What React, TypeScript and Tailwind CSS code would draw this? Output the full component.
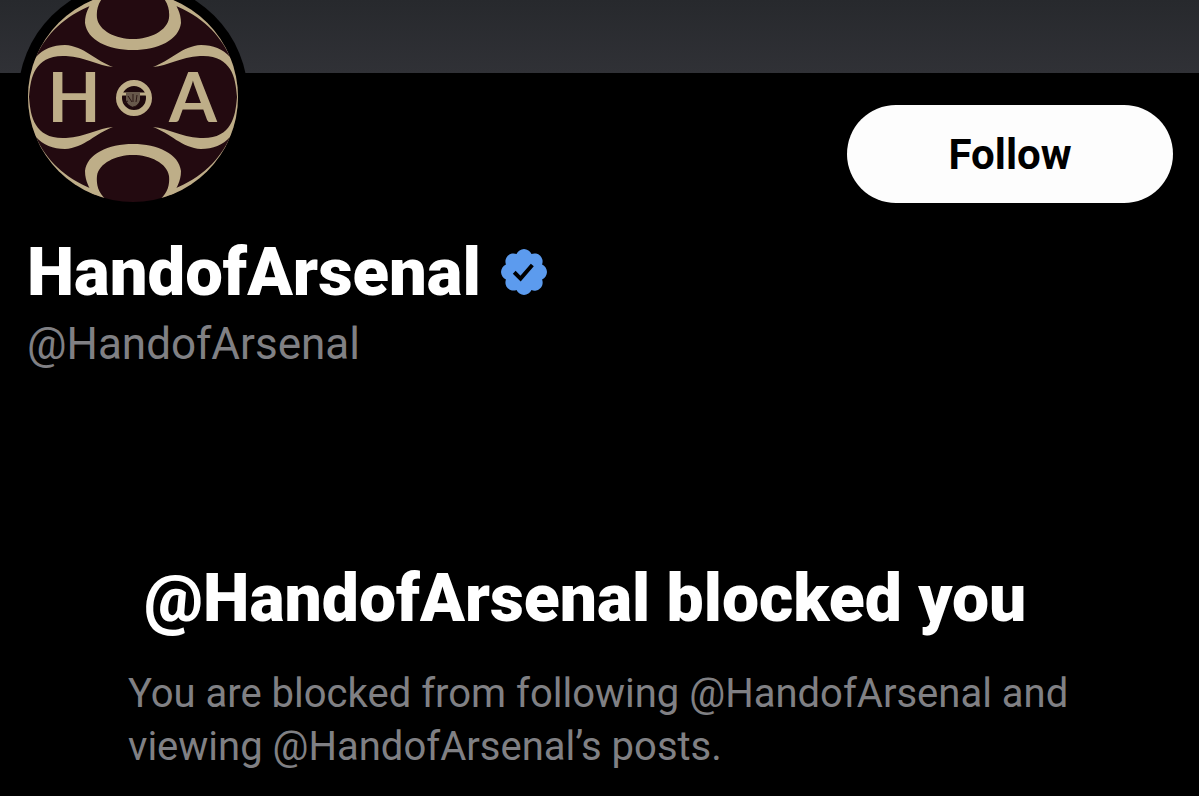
import React from 'react';

interface VerifiedBadgeProps {
  className?: string;
}

const HANDLE = '@HandofArsenal';

const Avatar: React.FC = () => (
  <svg
    viewBox="20 -16 226 226"
    className="h-[226px] w-[226px] overflow-visible"
    role="img"
    aria-label="HandofArsenal"
  >
    <defs>
      <clipPath id="disc">
        <circle cx="133" cy="97" r="105" />
      </clipPath>
      <path
        id="wave"
        d="M27 97 C27 82 30 66 36 57 C43 49 53 45 65 45 C84 46 96 61 113 67 C98 66 86 57 66 56 C50 55 41 61 36 69 C31 77 30 86 29 97 Z"
      />
      <path
        id="horn"
        d="M112 -10 L90 2 C91 6 85 11 85 23 C87 40 108 50 133 50 C158 50 179 40 181 23 C181 11 175 6 176 2 L154 -10 C167 -2 170 8 169 18 C167 31 150 39 133 39 C116 39 99 31 97 18 C96 8 99 -2 112 -10 Z"
      />
      <path id="rim" d="M36 57 C46 34 65 16 92 5 L98 -4 C68 4 44 26 36 57 Z" />
    </defs>
    <circle cx="133" cy="97" r="115" fill="#000" />
    <circle cx="133" cy="97" r="105" fill="#230a10" />
    <g clipPath="url(#disc)" fill="#beae88">
      <use href="#horn" />
      <use href="#horn" transform="matrix(1 0 0 -1 0 194)" />
      <use href="#wave" />
      <use href="#wave" transform="matrix(-1 0 0 1 266 0)" />
      <use href="#wave" transform="matrix(1 0 0 -1 0 194)" />
      <use href="#wave" transform="matrix(-1 0 0 -1 266 194)" />
      <use href="#rim" />
      <use href="#rim" transform="matrix(-1 0 0 1 266 0)" />
      <use href="#rim" transform="matrix(1 0 0 -1 0 194)" />
      <use href="#rim" transform="matrix(-1 0 0 -1 266 194)" />
    </g>
    <g fill="#beae88" fontFamily="Lato, sans-serif" fontWeight="700" fontSize="69" textAnchor="middle">
      <text x="74" y="122">H</text>
      <text x="193" y="122">A</text>
    </g>
    <circle cx="134" cy="98" r="15" fill="#1d080c" stroke="#beae88" strokeWidth="6" />
    <path d="M121 94h26" stroke="#beae88" strokeWidth="3" />
    <path d="M126 92h14v8q-2 6-7 7-6-2-7-7z" fill="#67584b" />
    <path d="M128 96l4 6M133 94v8M137 95l-1 7M124 103l4-2M139 103q-2 4-6 4" stroke="#2c1715" strokeWidth="1" fill="none" />
  </svg>
);

const VerifiedBadge: React.FC<VerifiedBadgeProps> = ({ className }) => (
  <svg viewBox="1.6 1.6 18.8 18.8" className={className} role="img" aria-label="Verified account">
    <path
      fill="#5c9bee"
      d="M20.396 11c-.018-.646-.215-1.275-.57-1.816-.354-.54-.852-.972-1.438-1.246.223-.607.27-1.264.14-1.897-.131-.634-.437-1.218-.882-1.687-.47-.445-1.053-.75-1.687-.882-.633-.13-1.29-.083-1.897.14-.273-.587-.704-1.086-1.245-1.44S11.647 1.62 11 1.604c-.646.017-1.273.213-1.813.568s-.969.854-1.24 1.44c-.608-.223-1.267-.272-1.902-.14-.635.13-1.22.436-1.69.882-.445.47-.749 1.055-.878 1.688-.13.633-.08 1.29.144 1.896-.587.274-1.087.705-1.443 1.245-.356.54-.555 1.17-.574 1.817.02.647.218 1.276.574 1.817.356.54.856.972 1.443 1.245-.224.606-.274 1.263-.144 1.896.13.634.433 1.218.877 1.688.47.443 1.054.747 1.687.878.633.132 1.29.084 1.897-.136.274.586.705 1.084 1.246 1.439.54.354 1.17.551 1.816.569.647-.016 1.276-.213 1.817-.567s.972-.854 1.245-1.44c.604.239 1.266.296 1.903.164.636-.132 1.22-.447 1.68-.907.46-.46.776-1.044.908-1.681s.075-1.299-.165-1.903c.586-.274 1.084-.705 1.439-1.246.354-.54.551-1.17.569-1.816z"
    />
    <path d="M7 11.1l2.6 2.6 4.8-5.6" fill="none" stroke="#000" strokeWidth="1.6" />
  </svg>
);

const App: React.FC = () => {
  return (
    <div className="min-h-screen overflow-hidden bg-black font-['Roboto',sans-serif] text-white">
      <div className="h-[73px] bg-linear-to-b from-[#27292d] to-[#303136]" />

      <header className="pl-5 pr-[26px]">
        <div className="flex items-start justify-between">
          <div className="-mt-[89px]">
            <Avatar />
          </div>
          <button
            type="button"
            className="mt-8 h-[98px] w-[326px] rounded-full bg-[#fdfdfd] text-[42px] font-bold text-black"
          >
            Follow
          </button>
        </div>

        <div className="mt-[26px] pl-[7px]">
          <div className="flex items-center gap-5">
            <h1 className="text-[67px] leading-[72px] font-black">HandofArsenal</h1>
            <VerifiedBadge className="h-[46px] w-[46px]" />
          </div>
          <p className="mt-[10px] text-[44px] leading-[53px] text-[#808084]">{HANDLE}</p>
        </div>
      </header>

      <main className="mt-48 px-32">
        <h2 className="pl-4 text-[66px] leading-[72px] font-black">{`${HANDLE} blocked you`}</h2>
        <p className="mt-8 text-[40px] leading-[53px] text-[#808084]">
          {`You are blocked from following ${HANDLE} and viewing ${HANDLE}’s posts.`}
        </p>
      </main>
    </div>
  );
};

export default App;
